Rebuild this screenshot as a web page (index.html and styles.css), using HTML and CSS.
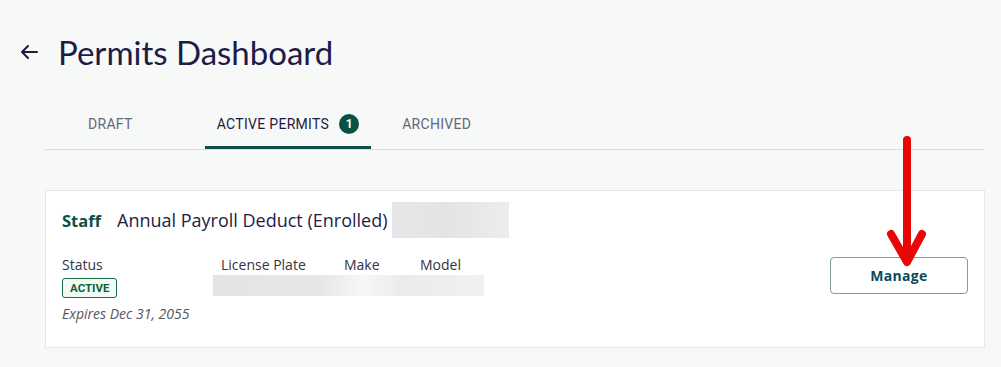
FILE: index.html
```html
<!DOCTYPE html>
<html lang="en">

<head>
    <meta charset="UTF-8">
    <meta name="viewport" content="width=device-width, initial-scale=1.0">
    <title>Permits Dashboard</title>
    <link rel="stylesheet" href="styles.css">
</head>

<body>
    <main class="page">
        <header class="page-header">
            <button class="back-button" aria-label="Back">
                <svg width="18" height="16" viewBox="0 0 18 16">
                    <path d="M17 8H2M8 2L2 8l6 6" fill="none" stroke="#1e1b3f" stroke-width="2" stroke-linecap="round" stroke-linejoin="round" />
                </svg>
            </button>
            <h1 class="title">Permits Dashboard</h1>
        </header>

        <nav class="tabs">
            <a class="tab tab-draft">Draft</a>
            <a class="tab tab-active selected">Active Permits <span class="count">1</span></a>
            <a class="tab tab-archived">Archived</a>
        </nav>

        <section class="card">
            <div class="card-head">
                <span class="role">Staff</span>
                <span class="plan">Annual Payroll Deduct (Enrolled)</span>
                <span class="redacted redacted-name"></span>
            </div>
            <div class="card-body">
                <div class="details">
                    <span class="label">Status</span>
                    <span class="label">License Plate</span>
                    <span class="label">Make</span>
                    <span class="label">Model</span>
                    <span class="status"><span class="badge">ACTIVE</span></span>
                    <span class="redacted redacted-vehicle"></span>
                    <span class="expires">Expires Dec 31, 2055</span>
                </div>
                <button class="manage-button">Manage</button>
            </div>
        </section>

        <svg class="pointer" width="50" height="150" viewBox="0 0 50 150">
            <path d="M25 6V126M9 100l16 28 15-28" fill="none" stroke="#e60707" stroke-width="8" stroke-linecap="round" stroke-linejoin="round" />
        </svg>
    </main>
</body>

</html>
```

FILE: styles.css
```css
body {
    margin: 0;
    background-color: #f7f8f8;
    font-family: "Open Sans", "Liberation Sans", sans-serif;
}

.page {
    position: relative;
    width: 1001px;
    height: 367px;
    overflow: hidden;
}

.page-header {
    display: flex;
    align-items: center;
    height: 36px;
    padding: 34px 0 0 20px;
}

.back-button {
    display: flex;
    width: 18px;
    height: 16px;
    padding: 0;
    margin-right: 20px;
    border: none;
    background: none;
}

.title {
    margin: 0;
    font-family: Lato, "Open Sans", sans-serif;
    font-size: 33px;
    font-weight: 400;
    line-height: 36px;
    color: #1e1b47;
}

.tabs {
    display: flex;
    margin: 30px 16px 0 45px;
    padding-left: 31px;
    border-bottom: 1px solid #dcdede;
}

.tab {
    display: flex;
    align-items: center;
    height: 44px;
    padding: 2px 12px 0;
    border-bottom: 3px solid transparent;
    font-family: Roboto, "Liberation Sans", sans-serif;
    font-size: 14px;
    letter-spacing: 0.3px;
    text-transform: uppercase;
    color: #66667a;
}

.tab-active {
    margin-left: 60px;
}

.tab-archived {
    margin-left: 19px;
}

.selected {
    border-bottom-color: #0b4f45;
    color: #1e1b3f;
}

.count {
    display: inline-flex;
    justify-content: center;
    align-items: center;
    width: 20px;
    height: 20px;
    margin-left: 10px;
    border-radius: 50%;
    background-color: #0b4f45;
    color: white;
    font-size: 12px;
    font-weight: 700;
    letter-spacing: 0;
}

.card {
    margin: 40px 16px 0 45px;
    padding: 11px 16px 23px;
    border: 1px solid #e6e8e8;
    background-color: white;
}

.card-head {
    display: flex;
    align-items: center;
    height: 36px;
    color: #1e1b47;
}

.role {
    margin-right: 16px;
    font-size: 16.5px;
    font-weight: 700;
    color: #0b4f45;
}

.plan {
    margin-right: 4px;
    font-size: 18px;
}

.redacted {
    background: linear-gradient(90deg, #e4e4e7 0%, #e7e7ea 40%, #f7f7f7 55%, #ebebeb 70%, #f1f1f1 100%);
}

.redacted-name {
    width: 117px;
    height: 36px;
    background: linear-gradient(90deg, #e6e6e9, #e4e4e7 50%, #ededef);
}

.card-body {
    display: flex;
    justify-content: space-between;
    align-items: flex-start;
    margin-top: 17px;
}

.details {
    display: grid;
    grid-template-columns: 159px 123px 76px 80px;
    grid-template-rows: 20px 23px 26px;
    font-size: 14px;
    color: #333344;
}

.label {
    line-height: 20px;
}

.status {
    display: flex;
    align-items: flex-start;
    padding-top: 3px;
}

.badge {
    display: inline-flex;
    align-items: center;
    height: 18px;
    padding: 0 7px;
    border: 1px solid #197244;
    border-radius: 3px;
    background-color: #f1faf4;
    font-family: Roboto, "Liberation Sans", sans-serif;
    font-size: 11.5px;
    font-weight: 700;
    color: #106238;
}

.redacted-vehicle {
    grid-column: 2 / 5;
    width: 271px;
    height: 21px;
    margin-left: -8px;
}

.expires {
    grid-column: 1 / 5;
    align-self: end;
    font-style: italic;
    line-height: 20px;
    color: #555560;
}

.manage-button {
    width: 138px;
    height: 37px;
    margin-top: 2px;
    border: 1px solid #7e9d9d;
    border-radius: 4px;
    background-color: white;
    font-family: "Open Sans", "Liberation Sans", sans-serif;
    font-size: 14px;
    font-weight: 700;
    color: #0f4a5a;
    letter-spacing: 0.3px;
}

.pointer {
    position: absolute;
    left: 882px;
    top: 134px;
}
```
